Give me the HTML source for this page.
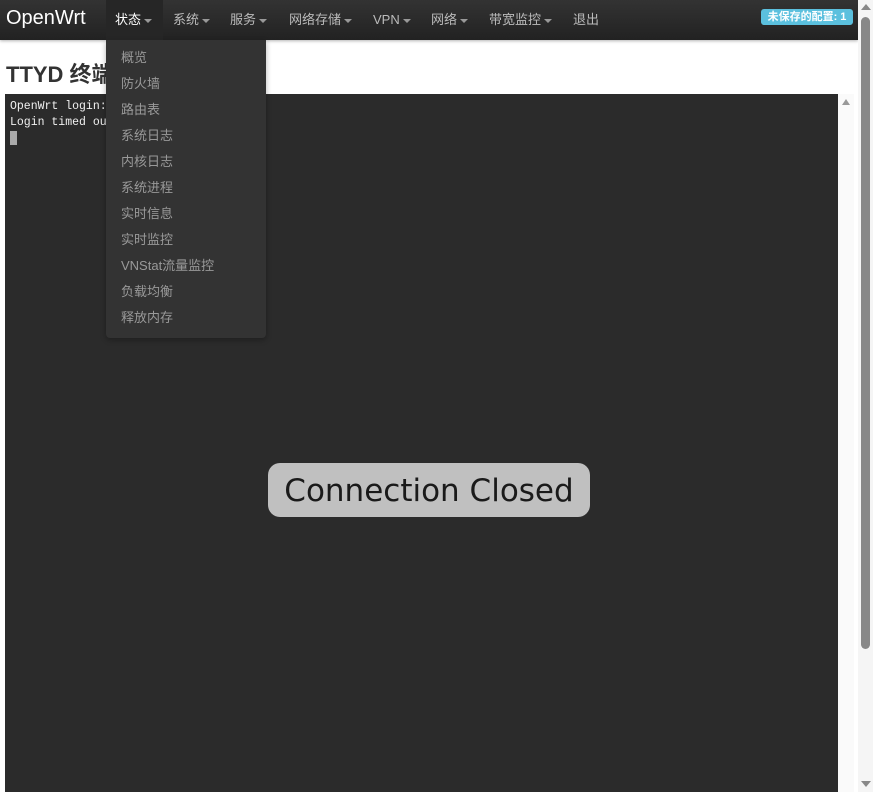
<!DOCTYPE html>
<html><head><meta charset="utf-8"><style>
*{margin:0;padding:0;box-sizing:border-box}
body{width:873px;height:792px;overflow:hidden;background:#fff;font-family:"Liberation Sans","Noto Sans CJK SC",sans-serif;position:relative}
.nav{position:absolute;left:0;top:0;width:858px;height:40px;background:linear-gradient(#333,#222);box-shadow:0 1px 3px rgba(0,0,0,.3)}
.brand{position:absolute;left:6px;top:7px;color:#fff;font-size:20px}
.ni{position:absolute;top:11px;height:18px;line-height:18px;color:#bbb;font-size:13px;white-space:nowrap}
.ni .c{display:inline-block;width:0;height:0;border-left:4px solid transparent;border-right:4px solid transparent;border-top:4px solid #999;vertical-align:middle;margin-left:3px}
.act{position:absolute;left:106px;top:0;width:57px;height:40px;background:#262626}
.badge{position:absolute;left:761px;top:9px;width:92px;height:16px;background:#5bc0de;border-radius:3px;color:#fff;font-size:11px;font-weight:bold;text-align:center;line-height:16px}
h2{position:absolute;left:6px;top:60px;font-size:22px;font-weight:bold;color:#333;line-height:30px}
.term{position:absolute;left:5px;top:94px;width:833px;height:698px;background:#2b2b2b;font-family:"Liberation Mono",monospace;font-size:11.5px;color:#f0f0f0;padding:5px 5px;line-height:16px}
.cur{display:inline-block;width:7px;height:14px;background:#aaa}
.tsb{position:absolute;left:838px;top:94px;width:16px;height:698px;background:#fafafa}
.cc{position:absolute;left:268px;top:463px;width:322px;height:54px;background:#c0c0c0;border-radius:12px;font-family:"DejaVu Sans","Liberation Sans",sans-serif;font-size:31px;color:#1a1a1a;text-align:center;line-height:56px}
.dd{position:absolute;left:106px;top:40px;width:160px;height:298px;background:#333;border-radius:0 0 4px 4px;box-shadow:0 2px 6px rgba(0,0,0,.3)}
.dd div{position:absolute;left:15px;color:#999;font-size:13px;line-height:18px}
.sb{position:absolute;left:858px;top:0;width:15px;height:792px;background:#f5f5f5}
.th{position:absolute;left:3px;top:17px;width:9px;height:632px;background:#888;border-radius:5px}
.up{position:absolute;width:0;height:0;border-left:4px solid transparent;border-right:4px solid transparent}
</style></head><body>
<div class="nav">
<div class="act"></div>
<div class="brand">OpenWrt</div>
<div class="ni" style="left:115px;color:#fff">状态<span class="c"></span></div>
<div class="ni" style="left:173px">系统<span class="c"></span></div>
<div class="ni" style="left:230px">服务<span class="c"></span></div>
<div class="ni" style="left:289px">网络存储<span class="c"></span></div>
<div class="ni" style="left:373px">VPN<span class="c"></span></div>
<div class="ni" style="left:431px">网络<span class="c"></span></div>
<div class="ni" style="left:489px">带宽监控<span class="c"></span></div>
<div class="ni" style="left:573px">退出</div>
<div class="badge">未保存的配置: 1</div>
</div>
<h2>TTYD 终端</h2>
<div class="term">OpenWrt login: <br>Login timed out<br><span class="cur"></span></div>
<div class="tsb"><div class="up" style="left:4px;top:5px;border-bottom:6px solid #999"></div></div>
<div class="cc">Connection Closed</div>
<div class="dd">
<div style="top:9px">概览</div>
<div style="top:35px">防火墙</div>
<div style="top:61px">路由表</div>
<div style="top:87px">系统日志</div>
<div style="top:113px">内核日志</div>
<div style="top:139px">系统进程</div>
<div style="top:165px">实时信息</div>
<div style="top:191px">实时监控</div>
<div style="top:217px">VNStat流量监控</div>
<div style="top:243px">负载均衡</div>
<div style="top:269px">释放内存</div>
</div>
<div class="sb"><div class="th"></div>
<div class="up" style="left:3px;top:4px;border-bottom:6px solid #888;border-left-width:5px;border-right-width:5px"></div>
<div class="up" style="left:3px;top:781px;border-top:6px solid #888;border-left-width:5px;border-right-width:5px"></div>
</div>
</body></html>
